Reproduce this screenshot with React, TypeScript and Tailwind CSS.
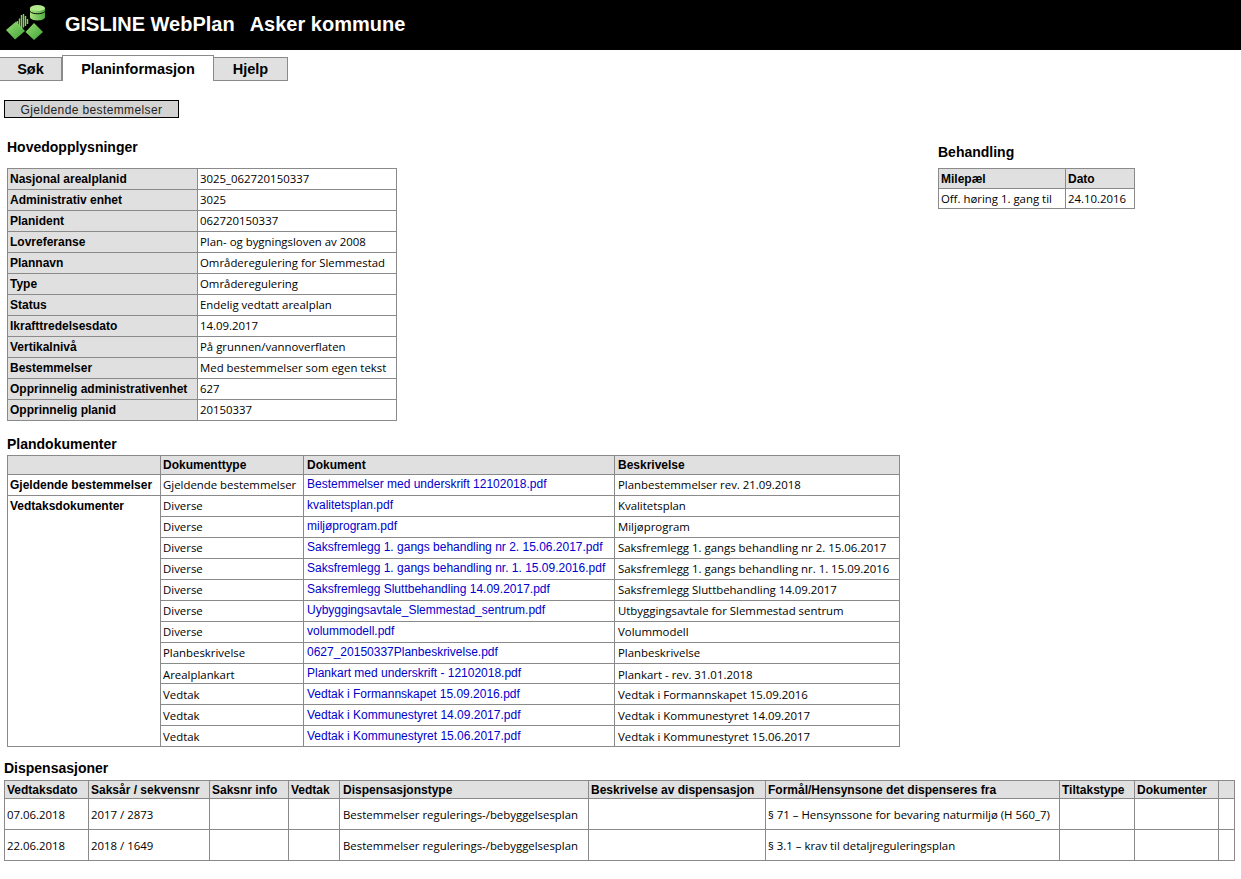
const main: [string, string][] = [
  ["Nasjonal arealplanid", "3025_062720150337"],
  ["Administrativ enhet", "3025"],
  ["Planident", "062720150337"],
  ["Lovreferanse", "Plan- og bygningsloven av 2008"],
  ["Plannavn", "Områderegulering for Slemmestad"],
  ["Type", "Områderegulering"],
  ["Status", "Endelig vedtatt arealplan"],
  ["Ikrafttredelsesdato", "14.09.2017"],
  ["Vertikalnivå", "På grunnen/vannoverflaten"],
  ["Bestemmelser", "Med bestemmelser som egen tekst"],
  ["Opprinnelig administrativenhet", "627"],
  ["Opprinnelig planid", "20150337"],
];

const docs: [string, string, string][] = [
  ["Diverse", "kvalitetsplan.pdf", "Kvalitetsplan"],
  ["Diverse", "miljøprogram.pdf", "Miljøprogram"],
  ["Diverse", "Saksfremlegg 1. gangs behandling nr 2. 15.06.2017.pdf", "Saksfremlegg 1. gangs behandling nr 2. 15.06.2017"],
  ["Diverse", "Saksfremlegg 1. gangs behandling nr. 1. 15.09.2016.pdf", "Saksfremlegg 1. gangs behandling nr. 1. 15.09.2016"],
  ["Diverse", "Saksfremlegg Sluttbehandling 14.09.2017.pdf", "Saksfremlegg Sluttbehandling 14.09.2017"],
  ["Diverse", "Uybyggingsavtale_Slemmestad_sentrum.pdf", "Utbyggingsavtale for Slemmestad sentrum"],
  ["Diverse", "volummodell.pdf", "Volummodell"],
  ["Planbeskrivelse", "0627_20150337Planbeskrivelse.pdf", "Planbeskrivelse"],
  ["Arealplankart", "Plankart med underskrift - 12102018.pdf", "Plankart - rev. 31.01.2018"],
  ["Vedtak", "Vedtak i Formannskapet 15.09.2016.pdf", "Vedtak i Formannskapet 15.09.2016"],
  ["Vedtak", "Vedtak i Kommunestyret 14.09.2017.pdf", "Vedtak i Kommunestyret 14.09.2017"],
  ["Vedtak", "Vedtak i Kommunestyret 15.06.2017.pdf", "Vedtak i Kommunestyret 15.06.2017"],
];

const dispCols = [84, 121, 79, 51, 249, 177, 294, 75, 84, 16];
const dispHead = ["Vedtaksdato", "Saksår / sekvensnr", "Saksnr info", "Vedtak", "Dispensasjonstype", "Beskrivelse av dispensasjon", "Formål/Hensynsone det dispenseres fra", "Tiltakstype", "Dokumenter", ""];
const disp = [
  ["07.06.2018", "2017 / 2873", "", "", "Bestemmelser regulerings-/bebyggelsesplan", "", "§ 71 – Hensynssone for bevaring naturmiljø (H 560_7)", "", "", ""],
  ["22.06.2018", "2018 / 1649", "", "", "Bestemmelser regulerings-/bebyggelsesplan", "", "§ 3.1 – krav til detaljreguleringsplan", "", "", ""],
];

const th = "border border-[#8a8a8a] bg-[#e0e0e0] px-[2px] py-0 text-left align-middle font-['Liberation_Sans',Arial,sans-serif] text-[12px] leading-[16px] font-bold text-black whitespace-nowrap overflow-hidden";
const td = "border border-[#8a8a8a] px-[2px] py-0 text-left align-middle font-['Open_Sans','Noto_Sans',sans-serif] text-[11.4px] leading-[16px] text-black whitespace-nowrap overflow-hidden";
const tdLink = "border border-[#8a8a8a] pl-[3px] pr-[2px] py-0 pb-[2px] text-left align-middle font-['Liberation_Sans',Arial,sans-serif] text-[12px] leading-[16px] text-[#0000cc] whitespace-nowrap overflow-hidden";
const h2 = "font-['Liberation_Sans',Arial,sans-serif] text-[14px] leading-[16px] font-bold text-black";

function Logo() {
  return (
    <svg width="50" height="50" viewBox="0 0 50 50" className="shrink-0">
      <defs>
        <linearGradient id="g" x1="0" y1="0" x2="1" y2="1">
          <stop offset="0" stopColor="#96dc6e" />
          <stop offset="1" stopColor="#3fa33a" />
        </linearGradient>
        <linearGradient id="c" x1="0" y1="0" x2="1" y2="0">
          <stop offset="0" stopColor="#a8e37e" />
          <stop offset="1" stopColor="#4fae3f" />
        </linearGradient>
      </defs>
      <path d="M6 30 L16 21.500 L25 31 L15 39.500 Z" fill="url(#g)" />
      <path d="M25.500 32 L34 23 L43 32 L34 40 Z" fill="url(#g)" />
      <path d="M17.500 21v4M19.500 18.500v8.500M21.500 15v14M23.500 14v13.500M25.500 16v10M27.500 19v5" stroke="#86d460" strokeWidth="1.400" fill="none" />
      <path d="M30 8 L45 8 L45 17 C45 21.500 30 21.500 30 17 Z" fill="url(#c)" />
      <ellipse cx="37.500" cy="8" rx="7.500" ry="3" fill="#b4e88c" />
      <path d="M30 11.500 C33 14.500 42 14.500 45 11.500" stroke="#0a0a0a" strokeWidth="1" fill="none" />
    </svg>
  );
}

export default function App() {
  return (
    <div className="min-h-[879px] w-[1241px] bg-white text-black">
      <header className="flex h-[50px] items-center bg-black font-['Liberation_Sans',Arial,sans-serif] text-[20px] font-bold text-white">
        <Logo />
        <span className="ml-[15px] pb-[2px]">GISLINE WebPlan</span>
        <span className="ml-[15px] pb-[2px]">Asker kommune</span>
      </header>

      <nav className="mt-[5px] flex h-[26px] items-start font-['Liberation_Sans',Arial,sans-serif] text-[14.5px] font-bold">
        <div className="mt-[2px] flex h-[24px] w-[62px] items-center justify-center border-y border-r border-[#8a8a8a] bg-[#e0e0e0] pt-[1px]">Søk</div>
        <div className="flex h-[26px] w-[152px] items-center justify-center border-x border-t border-[#8a8a8a] bg-white pt-[2px]">Planinformasjon</div>
        <div className="mt-[2px] flex h-[24px] w-[74px] items-center justify-center border-y border-r border-[#8a8a8a] bg-[#e0e0e0] pt-[1px]">Hjelp</div>
      </nav>

      <div className="mt-[19px] pl-[4px]">
        <button className="block h-[18px] w-[175px] border border-black bg-[#d3d3d3] pt-[1px] font-['Liberation_Sans',Arial,sans-serif] text-[12px] leading-[16px] tracking-[0.38px] text-[#222]">
          Gjeldende bestemmelser
        </button>
      </div>

      <div className="flex items-start">
        <div className="w-[938px] shrink-0 pl-[7px]">
          <h2 className={`${h2} mt-[21px]`}>Hovedopplysninger</h2>
          <table className="mt-[13px] w-[389px] table-fixed border-collapse">
            <colgroup>
              <col className="w-[190px]" />
              <col className="w-[199px]" />
            </colgroup>
            <tbody>
              {main.map(([k, v]) => (
                <tr key={k} className="h-[21px]">
                  <th className={th}>{k}</th>
                  <td className={td}>{v}</td>
                </tr>
              ))}
            </tbody>
          </table>

          <h2 className={`${h2} mt-[15px]`}>Plandokumenter</h2>
          <table className="mt-[3px] w-[892px] table-fixed border-collapse">
            <colgroup>
              <col className="w-[153px]" />
              <col className="w-[143px]" />
              <col className="w-[311px]" />
              <col className="w-[285px]" />
            </colgroup>
            <thead>
              <tr className="h-[19px]">
                <th className={th}></th>
                <th className={th}>Dokumenttype</th>
                <th className={`${th} !pl-[3px]`}>Dokument</th>
                <th className={`${th} !pl-[3px]`}>Beskrivelse</th>
              </tr>
            </thead>
            <tbody>
              <tr className="h-[21px]">
                <td className={`${td} !font-['Liberation_Sans',Arial,sans-serif] !text-[12px] font-bold`}>Gjeldende bestemmelser</td>
                <td className={td}>Gjeldende bestemmelser</td>
                <td className={tdLink}>Bestemmelser med underskrift 12102018.pdf</td>
                <td className={`${td} !pl-[3px]`}>Planbestemmelser rev. 21.09.2018</td>
              </tr>
              {docs.map((d, i) => (
                <tr key={d[1]} className={i === 8 ? "h-[20px]" : "h-[21px]"}>
                  {i === 0 && (
                    <td rowSpan={docs.length} className={`${td} !align-top !font-['Liberation_Sans',Arial,sans-serif] !text-[12px] pt-[2px] font-bold`}>
                      Vedtaksdokumenter
                    </td>
                  )}
                  <td className={i >= 8 ? `${td} pt-[2px]` : td}>{d[0]}</td>
                  <td className={i >= 9 ? `${tdLink} !pb-0` : tdLink}>{d[1]}</td>
                  <td className={i >= 8 ? `${td} !pl-[3px] pt-[2px]` : `${td} !pl-[3px]`}>{d[2]}</td>
                </tr>
              ))}
            </tbody>
          </table>
        </div>

        <div className="pt-[26px]">
          <h2 className={h2}>Behandling</h2>
          <table className="mt-[8px] w-[196px] table-fixed border-collapse">
            <colgroup>
              <col className="w-[127px]" />
              <col className="w-[69px]" />
            </colgroup>
            <thead>
              <tr className="h-[20px]">
                <th className={th}>Milepæl</th>
                <th className={th}>Dato</th>
              </tr>
            </thead>
            <tbody>
              <tr className="h-[20px]">
                <td className={td}>Off. høring 1. gang til</td>
                <td className={td}>24.10.2016</td>
              </tr>
            </tbody>
          </table>
        </div>
      </div>

      <section className="pl-[4px]">
        <h2 className={`${h2} mt-[13px]`}>Dispensasjoner</h2>
        <table className="mt-[4px] w-[1230px] table-fixed border-collapse">
          <colgroup>
            {dispCols.map((w, i) => (
              <col key={i} style={{ width: w }} />
            ))}
          </colgroup>
          <thead>
            <tr className="h-[18px]">
              {dispHead.map((h, i) => (
                <th key={i} className={i === 4 ? `${th} !pl-[3px]` : th}>{h}</th>
              ))}
            </tr>
          </thead>
          <tbody>
            {disp.map((r) => (
              <tr key={r[0]} className="h-[31px]">
                {r.map((c, i) => (
                  <td key={i} className={i === 4 ? `${td} !pl-[3px] pt-[2px]` : `${td} pt-[2px]`}>{c}</td>
                ))}
              </tr>
            ))}
          </tbody>
        </table>
      </section>
    </div>
  );
}
